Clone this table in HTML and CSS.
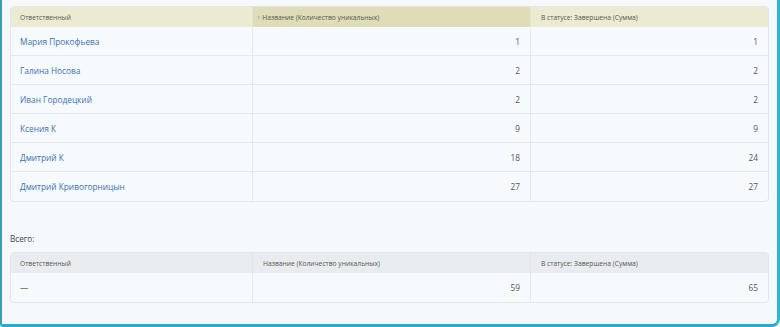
FILE: index.html
```html
<!DOCTYPE html>
<html lang="ru">
<head>
<meta charset="utf-8">
<link rel="stylesheet" href="styles.css">
</head>
<body>
<div class="frame">
  <div class="grid main">
    <div class="th">Ответственный</div>
    <div class="th sorted"><span class="arrow">↑</span> Название (Количество уникальных)</div>
    <div class="th">В статусе: Завершена (Сумма)</div>

    <div class="td"><a>Мария Прокофьева</a></div><div class="td num">1</div><div class="td num">1</div>
    <div class="td"><a>Галина Носова</a></div><div class="td num">2</div><div class="td num">2</div>
    <div class="td"><a>Иван Городецкий</a></div><div class="td num">2</div><div class="td num">2</div>
    <div class="td"><a>Ксения К</a></div><div class="td num">9</div><div class="td num">9</div>
    <div class="td"><a>Дмитрий К</a></div><div class="td num">18</div><div class="td num">24</div>
    <div class="td last"><a>Дмитрий Кривогорницын</a></div><div class="td num last">27</div><div class="td num last">27</div>
  </div>

  <div class="total-label">Всего:</div>

  <div class="grid totals">
    <div class="th">Ответственный</div>
    <div class="th">Название (Количество уникальных)</div>
    <div class="th">В статусе: Завершена (Сумма)</div>

    <div class="td last dash">—</div><div class="td num last">59</div><div class="td num last">65</div>
  </div>
</div>
</body>
</html>
```
FILE: styles.css
```css
html, body {
  margin: 0;
  padding: 0;
  background: #f5f9fc;
}
body {
  font-family: "Open Sans", "Liberation Sans", sans-serif;
  color: #444;
}
.frame {
  box-sizing: border-box;
  width: 780px;
  height: 327px;
  background: #f5f9fc;
  border-left: 2px solid #3c9db6;
  border-right: 3px solid #2fb5d2;
  border-bottom: 3px solid #2aa9c8;
  border-bottom-right-radius: 8px;
  border-bottom-left-radius: 3px;
  padding: 6px 8px 0 8px;
}
.grid {
  display: grid;
  grid-template-columns: 241px 278px 1fr;
  border: 1px solid #e1e6ea;
  border-radius: 4px;
  background: #f7fafd;
  overflow: hidden;
}
.th {
  height: 20px;
  display: flex;
  align-items: center;
  padding: 0 10px;
  font-size: 6.7px;
  color: #555;
  background: #ecebd2;
  border-left: 1px solid #e4e4d0;
}
.th:first-child { border-left: none; padding-left: 9px; }
.th.sorted { background: #dfddb7; padding-left: 4px; }
.arrow { font-size: 6.5px; margin-right: 2px; color: #777; }
.totals .th { background: #e9ecee; border-left-color: #e1e4e6; }
.td {
  height: 28px;
  display: flex;
  align-items: center;
  padding: 0 10px;
  font-size: 8.3px;
  border-bottom: 1px solid #e6eaed;
  border-left: 1px solid #e6eaed;
}
.td:nth-child(3n+1) { border-left: none; padding-left: 9px; }
.td.last { border-bottom: none; height: 29px; }
.td a { color: #3a6eb0; }
.num { justify-content: flex-end; color: #555; }
.dash { color: #555; }
.total-label {
  font-size: 8.2px;
  color: #444;
  margin: 31px 0 7px 0;
  height: 12px;
  line-height: 12px;
}
```
